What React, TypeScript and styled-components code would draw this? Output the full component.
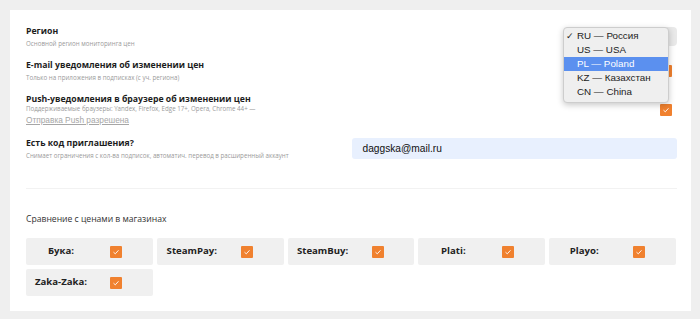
import React from 'react';
import styled, { createGlobalStyle } from 'styled-components';

const GlobalStyle = createGlobalStyle`
    html, body {
        margin: 0;
        padding: 0;
        background: #efefef;
    }
    body {
        font-family: "Open Sans", "Liberation Sans", sans-serif;
        color: #222;
    }
`;

const Card = styled.div`
    margin: 10px 9px 9px 10px;
    background: #fff;
    padding: 14px 14px 15px 16px;
`;

const Row = styled.div`
    display: grid;
    grid-template-columns: 1fr 1fr;
    align-items: center;
    margin-bottom: 9px;
`;

const Title = styled.div`
    font-size: 8.7px;
    line-height: 14px;
    font-weight: 700;
    color: #1d1d1d;
`;

const Hint = styled.div<{ $tight?: boolean }>`
    font-size: 6.2px;
    line-height: 11px;
    margin-top: ${p => (p.$tight ? -3 : 0)}px;
    color: #9a9a9a;
`;

const PushLink = styled.a`
    display: block;
    font-family: "Liberation Sans", Arial, sans-serif;
    font-size: 8.3px;
    line-height: 13px;
    color: #a6a6a6;
    text-decoration: underline;
`;

const Control = styled.div`
    display: flex;
    justify-content: flex-end;
    position: relative;
`;

const SelectBox = styled.div`
    width: 110px;
    height: 19px;
    background: #e9e9e9;
    border-radius: 4px;
`;

const Popup = styled.div`
    position: absolute;
    z-index: 10;
    top: 0;
    right: 8px;
    width: 104px;
    padding: 1px 0 3px;
    background: #efefef;
    border: 1px solid #cdcdcd;
    border-radius: 4px;
    box-shadow: 0 2px 6px rgba(0, 0, 0, 0.22);
    font-family: "Liberation Sans", Arial, sans-serif;
    font-size: 9.8px;
    color: #222;
`;

const Option = styled.div<{ $active?: boolean }>`
    position: relative;
    height: 14px;
    line-height: 14px;
    padding-left: 13px;
    background: ${p => (p.$active ? '#5b90ef' : 'transparent')};
    color: ${p => (p.$active ? '#fff' : '#222')};
    white-space: nowrap;
`;

const Tick = styled.span`
    position: absolute;
    left: 2px;
    font-size: 9px;
`;

const Box = styled.span<{ $mr?: number }>`
    display: inline-flex;
    align-items: center;
    justify-content: center;
    width: 12px;
    height: 12px;
    margin-right: ${p => p.$mr ?? 0}px;
    background: #f0812f;
    border-radius: 1px;
`;

const EmailInput = styled.div`
    flex: 1;
    height: 21px;
    line-height: 21px;
    padding-left: 11px;
    background: #e8f0fe;
    border-radius: 3px;
    font-family: "Liberation Sans", Arial, sans-serif;
    font-size: 10.2px;
    color: #111;
`;

const Divider = styled.hr`
    border: 0;
    border-top: 1px solid #f2f2f2;
    margin: 27px 0 23px;
`;

const SectionTitle = styled.div`
    font-size: 8.6px;
    line-height: 14px;
    color: #333;
    margin-bottom: 12px;
`;

const Shops = styled.div`
    display: grid;
    grid-template-columns: repeat(5, 1fr);
    gap: 4px;
    width: 650px;
`;

const Shop = styled.div`
    display: flex;
    align-items: center;
    height: 27px;
    background: #f0f0f0;
    border-radius: 2px;
`;

const ShopName = styled.span`
    width: 70px;
    text-align: center;
    font-size: 9.6px;
    font-weight: 700;
    color: #222;
    margin-top: -2px;
    margin-right: 14px;
`;

const Check = () => (
    <svg width="8" height="8" viewBox="0 0 8 8">
        <path d="M1.5 4.2 L3.3 5.8 L6.5 2.3" fill="none" stroke="#fff" strokeWidth="0.9" />
    </svg>
);

const regions = ['RU — Россия', 'US — USA', 'PL — Poland', 'KZ — Казахстан', 'CN — China'];
const shops = ['Бука:', 'SteamPay:', 'SteamBuy:', 'Plati:', 'Playo:', 'Zaka-Zaka:'];

export default function App() {
    return (
        <React.Fragment>
            <GlobalStyle />
            <Card>
                <Row>
                    <div>
                        <Title>Регион</Title>
                        <Hint>Основной регион мониторинга цен</Hint>
                    </div>
                    <Control>
                        <SelectBox />
                        <Popup>
                            {regions.map((r, i) => (
                                <Option key={r} $active={i === 2}>
                                    {i === 0 && <Tick>✓</Tick>}
                                    {r}
                                </Option>
                            ))}
                        </Popup>
                    </Control>
                </Row>
                <Row>
                    <div>
                        <Title>E-mail уведомления об изменении цен</Title>
                        <Hint>Только на приложения в подписках (с уч. региона)</Hint>
                    </div>
                    <Control>
                        <Box $mr={5}><Check /></Box>
                    </Control>
                </Row>
                <Row>
                    <div>
                        <Title>Push-уведомления в браузере об изменении цен</Title>
                        <Hint $tight>Поддерживаемые браузеры: Yandex, Firefox, Edge 17+, Opera, Chrome 44+ —</Hint>
                        <PushLink>Отправка Push разрешена</PushLink>
                    </div>
                    <Control>
                        <Box $mr={5}><Check /></Box>
                    </Control>
                </Row>
                <Row>
                    <div>
                        <Title>Есть код приглашения?</Title>
                        <Hint>Снимает ограничения с кол-ва подписок, автоматич. перевод в расширенный аккаунт</Hint>
                    </div>
                    <Control>
                        <EmailInput>daggska@mail.ru</EmailInput>
                    </Control>
                </Row>
                <Divider />
                <SectionTitle>Сравнение с ценами в магазинах</SectionTitle>
                <Shops>
                    {shops.map(s => (
                        <Shop key={s}>
                            <ShopName>{s}</ShopName>
                            <Box><Check /></Box>
                        </Shop>
                    ))}
                </Shops>
            </Card>
        </React.Fragment>
    );
}
